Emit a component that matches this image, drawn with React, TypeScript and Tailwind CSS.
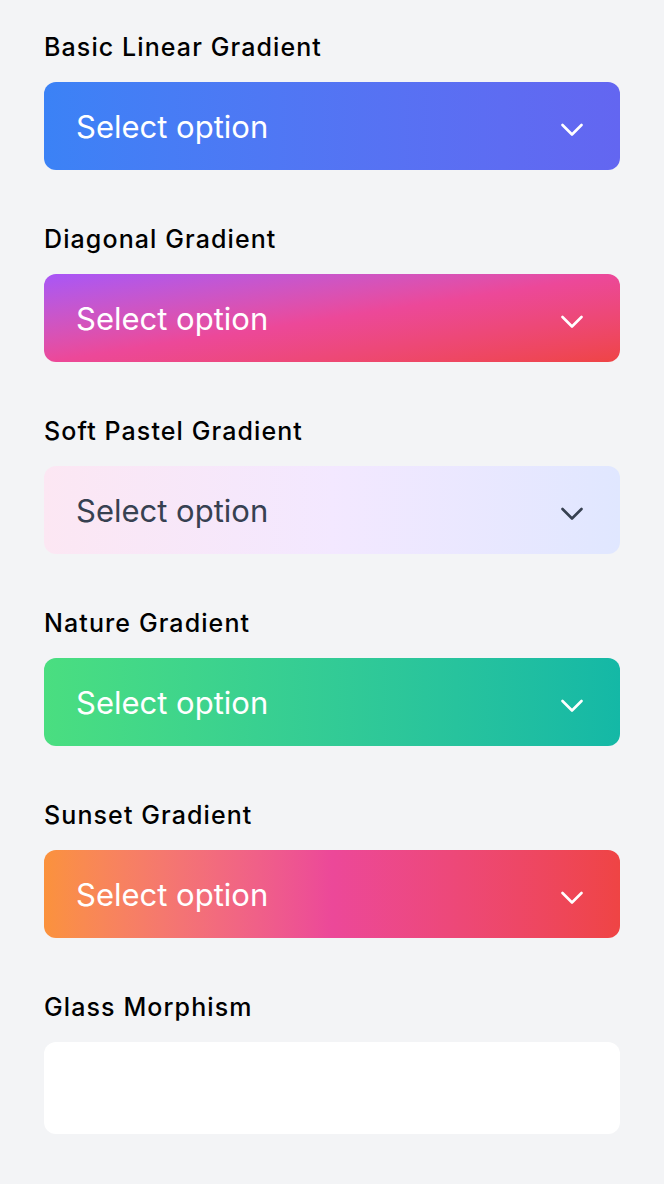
import React from 'react';

interface GradientSelectProps {
  label: string;
  boxClass: string;
  textClass?: string;
  height?: string;
  empty?: boolean;
}

const Chevron: React.FC<{ className?: string }> = ({ className }) => (
  <svg
    width="22"
    height="14"
    viewBox="0 0 22 14"
    fill="none"
    className={className}
  >
    <polyline
      points="1.5,2 11,11.5 20.5,2"
      stroke="currentColor"
      strokeWidth="2.6"
      strokeLinecap="round"
      strokeLinejoin="round"
    />
  </svg>
);

const GradientSelect: React.FC<GradientSelectProps> = ({
  label,
  boxClass,
  textClass = 'text-white',
  height = 'h-[88px]',
  empty = false,
}) => (
  <div className="flex flex-col">
    <label className="text-[25px] leading-8 font-medium tracking-[1.1px] text-black mb-[19px]">
      {label}
    </label>
    <div
      className={`${height} ${boxClass} ${textClass} rounded-xl flex items-center justify-between pl-8 pr-[37px]`}
    >
      {!empty && <span className="text-[31px] leading-none">Select option</span>}
      {!empty && <Chevron className="mt-2" />}
    </div>
  </div>
);

const App: React.FC = () => {
  return (
    <div
      className="min-h-[1184px] bg-[#f3f4f6] px-11 pt-[31px] flex flex-col gap-[53px]"
      style={{ fontFamily: 'Inter, "Liberation Sans", sans-serif' }}
    >
      <GradientSelect
        label="Basic Linear Gradient"
        boxClass="bg-gradient-to-r from-[#3b82f6] to-[#6366f1]"
      />
      <GradientSelect
        label="Diagonal Gradient"
        boxClass="bg-gradient-to-br from-[#a855f7] via-[#ec4899] to-[#ef4444]"
      />
      <GradientSelect
        label="Soft Pastel Gradient"
        boxClass="bg-gradient-to-r from-[#fce7f3] via-[#f3e8ff] to-[#e0e7ff]"
        textClass="text-[#374151]"
      />
      <GradientSelect
        label="Nature Gradient"
        boxClass="bg-gradient-to-r from-[#4ade80] to-[#14b8a6]"
      />
      <GradientSelect
        label="Sunset Gradient"
        boxClass="bg-gradient-to-r from-[#fb923c] via-[#ec4899] to-[#ef4444]"
      />
      <GradientSelect
        label="Glass Morphism"
        boxClass="bg-white"
        height="h-[92px]"
        empty
      />
    </div>
  );
};

export default App;
